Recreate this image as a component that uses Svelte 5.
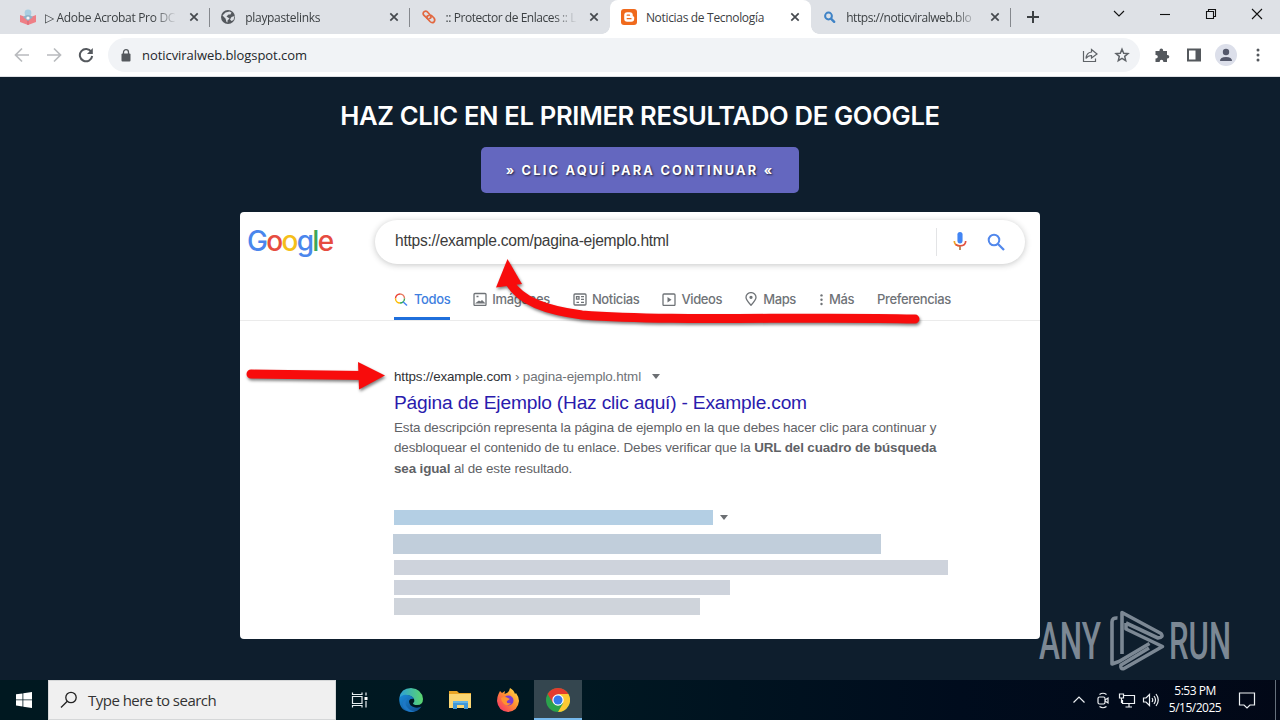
<script lang="ts">
  interface Tab {
    title: string;
    icon: string;
    active?: boolean;
  }

  const tabs: Tab[] = [
    { title: '▷ Adobe Acrobat Pro DC', icon: 'book' },
    { title: 'playpastelinks', icon: 'globe' },
    { title: ':: Protector de Enlaces :: L', icon: 'link' },
    { title: 'Noticias de Tecnología', icon: 'blogger', active: true },
    { title: 'https://noticviralweb.blo', icon: 'search' }
  ];

  const filters = ['Todos', 'Imágenes', 'Noticias', 'Videos', 'Maps', 'Más', 'Preferencias'];
</script>

<div class="screen">
  <div class="tabstrip">
    {#each tabs as tab, i}
      <div class="tab" class:active={tab.active} class:divided={i < 2 || i === 4}>
        <svg class="favicon" viewBox="0 0 16 16">
          {#if tab.icon === 'book'}
            <path d="M0 6l8 3 8-3v7l-8 3-8-3z" fill="#ee7f86" />
            <path d="M8 9v7" stroke="#d9606c" />
            <circle cx="8" cy="4" r="3.4" fill="#a9cfe2" />
            <path d="M3 8q5-4 10 0l-5 4z" fill="#8fb2c8" />
            <circle cx="8" cy="9" r="1.6" fill="#f4f4f6" />
          {:else if tab.icon === 'globe'}
            <circle cx="8" cy="8" r="7" fill="#54585d" />
            <path d="M2.500 6.500l3 3 1 3.500 1 .500v-2l2-2-3-2 2-2h2l1-2-2-1-4 1zM11.500 8l3-1-1 4-2 1-1.500-1.500z" fill="#dee1e6" />
          {:else if tab.icon === 'link'}
            <g fill="none" stroke="#e2673f" stroke-width="1.700" stroke-linecap="round">
              <path d="M6.500 9.500L3 6.500Q1 4 3.500 2.500Q5.500 1.500 7 3.500L9.500 6.500Q11 9 8.500 9.500" />
              <path d="M8 6.500Q5.500 6.500 6 9L9 12.500Q11 14.500 13 13Q14.500 11 13 9L10.500 6.500" />
            </g>
          {:else if tab.icon === 'blogger'}
            <rect width="16" height="16" rx="3" fill="#f06a1d" />
            <path d="M6.200 3.200h2.600a3 3 0 0 1 3 3v.600q0 .700.700.700.700 0 .700.700v1.600a3 3 0 0 1-3 3h-4a3 3 0 0 1-3-3V6.200a3 3 0 0 1 3-3z" fill="#fff" />
            <path d="M6.200 6.200h2.300M6.200 9.700h3.800" stroke="#f06a1d" stroke-width="1.300" stroke-linecap="round" />
          {:else}
            <circle cx="7.500" cy="7" r="3.400" fill="none" stroke="#3f83c6" stroke-width="2" />
            <path d="M10.200 9.800l3 3" stroke="#3f83c6" stroke-width="2.400" stroke-linecap="round" />
          {/if}
        </svg>
        <span class="tab-title" class:long={i === 2 || i === 4}>{tab.title}</span>
        <svg class="tab-close" viewBox="0 0 10 10"><path d="M1.300 1.300l7.400 7.400M8.700 1.300L1.300 8.700" stroke="#45494e" stroke-width="1.700" /></svg>
      </div>
    {/each}
    <svg class="new-tab" viewBox="0 0 12 12"><path d="M6 0v12M0 6h12" stroke="#3c4043" stroke-width="2" /></svg>
    <div class="window-controls">
      <svg viewBox="0 0 12 12"><path d="M1 3l5 5 5-5" /></svg>
      <svg viewBox="0 0 12 12"><path d="M1 6.500h10" /></svg>
      <svg viewBox="0 0 12 12"><path d="M1.500 3.500h7v7h-7zM3.500 3.500v-2h7v7h-2" /></svg>
      <svg viewBox="0 0 12 12"><path d="M1 1l10 10M11 1L1 11" /></svg>
    </div>
  </div>

  <div class="toolbar">
    <div class="nav">
      <svg viewBox="0 0 16 16" stroke="#b9bbbe"><path d="M15 8H1.500M8 1.500L1.500 8 8 14.500" /></svg>
      <svg viewBox="0 0 16 16" stroke="#b9bbbe"><path d="M1 8h13.500M8 1.500L14.500 8 8 14.500" /></svg>
      <svg viewBox="0 0 16 16" stroke="#55595e"><path d="M13.300 4.800A6.200 6.200 0 1 0 14.200 9" stroke-width="2" /><path d="M14.800 1v6H9z" fill="#55595e" stroke="none" /></svg>
    </div>
    <div class="omnibox">
      <svg class="lock" viewBox="0 0 10 13"><rect x=".5" y="4.500" width="9" height="8" rx="1" fill="#54585d" /><path d="M2.500 5V3.200a2.500 2.500 0 0 1 5 0V5" fill="none" stroke="#54585d" stroke-width="1.300" /></svg>
      <span class="address">noticviralweb.blogspot.com</span>
      <svg class="share" viewBox="0 0 16 16" fill="none" stroke="#5f6368" stroke-width="1.200"><path d="M1.500 4v10.500h12V11.500M9.500 2.500l5.500 4.500-5.500 4v-2.500Q6 8.500 4 11.500 4.500 5.500 9.500 5z" /></svg>
      <svg class="star" viewBox="0 0 16 16" fill="none" stroke="#5f6368" stroke-width="1.500"><path d="M8 2.200l1.700 4 4.300.400-3.300 2.800 1 4.300L8 11.400l-3.700 2.300 1-4.300L2 6.600l4.300-.400z" /></svg>
    </div>
    <div class="actions">
      <svg viewBox="0 0 16 16" fill="#54585d"><path d="M1.500 4h4V3.200a1.800 1.800 0 0 1 3.600 0V4H13v4h.500a1.800 1.800 0 0 1 0 3.600H13V15H9.300v-.500a1.800 1.800 0 0 0-3.600 0v.500H1.500v-3.500H2a1.800 1.800 0 0 0 0-3.600h-.500z" /></svg>
      <svg viewBox="0 0 16 16"><path d="M2 2.500h12v11H2z" fill="none" stroke="#54585d" stroke-width="2" /><path d="M9.500 2h5v12h-5z" fill="#54585d" /></svg>
      <span class="avatar"><svg viewBox="0 0 16 16" fill="#54586b"><circle cx="8" cy="5" r="3.200" /><path d="M2 14q0-4 6-4t6 4z" /></svg></span>
      <svg viewBox="0 0 16 16" fill="#54585d"><circle cx="8" cy="3" r="1.500" /><circle cx="8" cy="8" r="1.500" /><circle cx="8" cy="13" r="1.500" /></svg>
    </div>
  </div>

  <main>
    <h1>HAZ CLIC EN EL PRIMER RESULTADO DE GOOGLE</h1>
    <button>» CLIC AQUÍ PARA CONTINUAR «</button>

    <section class="preview">
      <div class="search-row">
        <div class="google"><span class="b">G</span><span class="r">o</span><span class="y">o</span><span class="b">g</span><span class="g">l</span><span class="r">e</span></div>
        <div class="search-box">
          <span class="query">https://example.com/pagina-ejemplo.html</span>
          <span class="rule"></span>
          <svg class="mic" viewBox="0 0 14 20">
            <rect x="4.300" y="0" width="5.400" height="12" rx="2.700" fill="#4285f4" />
            <path d="M1 9.500q0 5 6 5" fill="none" stroke="#f0a328" stroke-width="1.800" />
            <path d="M13 9.500q0 5-6 5-3 0-4.500-1.500" fill="none" stroke="#e25241" stroke-width="1.800" />
            <path d="M7 15v4" stroke="#b87842" stroke-width="1.800" />
          </svg>
          <svg class="glass" viewBox="0 0 18 18" fill="none" stroke="#5288ec" stroke-width="2"><circle cx="7" cy="7" r="5.300" /><path d="M11 11l6 6" stroke-width="2.300" /></svg>
        </div>
      </div>

      <div class="filters">
        {#each filters as name, i}
          <div class="filter" class:selected={i === 0}>
            {#if i === 0}
              <svg viewBox="0 0 14 14" fill="none" stroke-width="1.400"><path d="M1.500 6.500A4.500 4.500 0 0 1 6 2" stroke="#ea4335" /><path d="M6 2a4.500 4.500 0 0 1 4.500 4.500" stroke="#e8775f" /><path d="M1.500 6.500A4.500 4.500 0 0 0 6 11" stroke="#fbbc04" /><path d="M6 11a4.500 4.500 0 0 0 4.500-4.500" stroke="#34a853" /><path d="M9 9.700l4 3.800" stroke="#4285f4" /></svg>
            {:else if i === 1}
              <svg viewBox="0 0 14 14" fill="none" stroke="#6f7377" stroke-width="1.300"><rect x="1" y="1.500" width="12" height="12" rx="1" /><path d="M4 10.800l2-1.500 1.500 1 1.500-1.500 2 2zM3.500 4.500h2" fill="#6f7377" /></svg>
            {:else if i === 2}
              <svg viewBox="0 0 14 14" fill="none" stroke="#6f7377" stroke-width="1.300"><rect x="1" y="2" width="12" height="11" rx="1" /><path d="M3.500 4.700h2.500v2.500H3.500zM8 4.700h3M8 7.300h3M3.500 10.300H6M8 10.300h3" /></svg>
            {:else if i === 3}
              <svg viewBox="0 0 14 14"><rect x="1" y="2" width="12" height="11.500" rx="1" fill="none" stroke="#6f7377" stroke-width="1.300" /><path d="M5.500 5v5.500l4-2.750z" fill="#6f7377" /></svg>
            {:else if i === 4}
              <svg class="pin" viewBox="0 0 12 14" fill="none" stroke="#6f7377" stroke-width="1.300"><path d="M6 13.300Q1 8 1 5.300a5 4.700 0 0 1 10 0Q11 8 6 13.300z" /><circle cx="6" cy="5.300" r="1" fill="#6f7377" /></svg>
            {:else if i === 5}
              <svg class="dots" viewBox="0 0 5 14" fill="#6f7377"><circle cx="2.500" cy="3.400" r="1.200" /><circle cx="2.500" cy="7.700" r="1.200" /><circle cx="2.500" cy="12" r="1.200" /></svg>
            {/if}
            <span>{name}</span>
          </div>
        {/each}
      </div>

      <div class="result">
        <div class="crumbs"><span class="host">https://example.com</span> › pagina-ejemplo.html <i class="caret"></i></div>
        <div class="title">Página de Ejemplo (Haz clic aquí) - Example.com</div>
        <p>
          <span class="line">Esta descripción representa la página de ejemplo en la que debes hacer clic para continuar y</span>
          <span class="line">desbloquear el contenido de tu enlace. Debes verificar que la <b>URL del cuadro de búsqueda</b></span>
          <span class="line"><b>sea igual</b> al de este resultado.</span>
        </p>
      </div>

      <div class="placeholder">
        <div class="with-caret"><div class="bar one"></div><i class="caret"></i></div>
        <div class="bar two"></div>
        <div class="bar three"></div>
        <div class="bar four"></div>
        <div class="bar five"></div>
      </div>

      <!-- hand drawn arrows over the result page -->
      <svg class="arrows" viewBox="0 0 800 427">
        <g fill="none" stroke="#f80c0c" stroke-linecap="round" stroke-width="9">
          <path d="M270 71C281 89 305 98 342 103C435 110 560 104 675 107" />
          <path d="M11 162L124 163.500" />
        </g>
        <path d="M267.500 47l14.500 25L256 75.500z" fill="#f80c0c" />
        <path d="M118 150l27 13.500-26 14z" fill="#f80c0c" />
      </svg>
    </section>

    <svg class="watermark" viewBox="0 0 192 62">
      <text x="0" y="49" textLength="62" lengthAdjust="spacingAndGlyphs">ANY</text>
      <text x="130" y="49" textLength="62" lengthAdjust="spacingAndGlyphs">RUN</text>
      <g fill="none" stroke="#7c8894" stroke-width="3.600" stroke-linejoin="round">
        <path d="M78.500 8Q73 7.500 73 12v42l7-2.500L110.500 33.500" />
        <path d="M83 44V2.500L122 23.500q3 4-3 4.500L87 13" />
        <path d="M87 13v6l36.500 17.500L85 58.500q-4 1-3-3.500L110 38" />
      </g>
    </svg>
  </main>

  <footer>
    <div class="start">
      <svg viewBox="0 0 16 16" fill="#fff"><path d="M0 2.300l6.500-.900v6.100H0zM7.300 1.300L16 0v7.500H7.300zM0 8.300h6.500v6.200L0 13.600zM7.300 8.300H16V16l-8.700-1.300z" /></svg>
    </div>
    <div class="searchbar">
      <svg viewBox="0 0 18 18" fill="none" stroke="#222" stroke-width="1.300"><circle cx="11" cy="6.500" r="5.200" /><path d="M7.300 10.200L1 16.500" /></svg>
      <span>Type here to search</span>
    </div>
    <div class="app">
      <svg class="taskview" viewBox="0 0 18 18" fill="none" stroke="#e6edf0" stroke-width="1.200"><path d="M1.500 5.500h9.500v7H1.500zM1.500 1.500v2h9.500v-2M1.500 16.500v-2h9.500v2M15 1.500v3M15 10v6.500" /><path d="M13.500 6h3v3h-3z" fill="#fff" stroke="none" /></svg>
    </div>
    <div class="app edge-app">
      <svg viewBox="0 0 24 24">
        <defs>
          <linearGradient id="edgeTop" x1="0" x2="1"><stop offset="0" stop-color="#2c9fd8" /><stop offset="1" stop-color="#5bd66d" /></linearGradient>
          <linearGradient id="edgeBody" x1="0" y1="0" x2="1" y2="1"><stop offset="0" stop-color="#198bd8" /><stop offset="1" stop-color="#114a8b" /></linearGradient>
        </defs>
        <path d="M.3 10Q2 0 12 0q11 1 12 11 0 6-6 6-4 0-4-2 2-1 1-4-2-4-7-3.500Q3 8 .3 10z" fill="url(#edgeTop)" />
        <path d="M.2 10.500Q3 6 8.500 7q5 .500 6.500 4-4-1-5 2 0 5 6 6.500 4 .500 6.500-1Q19 24 12 24 0 23 .2 10.500z" fill="url(#edgeBody)" />
        <path d="M8.500 10.500Q5 15 8 19t8 4.500q-4 1-7-.200Q3 20 3.500 15q1-4 5-4.500z" fill="#1d78c6" />
      </svg>
    </div>
    <div class="app files-app">
      <svg viewBox="0 0 24 24"><path d="M1 3h8l2 2h12v15H1z" fill="#e9a526" /><path d="M1 6h22v14H1z" fill="#fbd673" /><path d="M5 21v-8h15v8h-4v-4H9v4z" fill="#4198d7" /><path d="M5 13h15v2H5z" fill="#65b5e5" /></svg>
    </div>
    <div class="app firefox-app">
      <svg viewBox="0 0 24 24">
        <defs><linearGradient id="fox" x1="1" y1="0" x2="0" y2="1"><stop offset="0" stop-color="#ffe94a" /><stop offset=".45" stop-color="#ff9030" /><stop offset="1" stop-color="#f52472" /></linearGradient></defs>
        <path d="M2.500 6L4 3l2 2 3-2-.500 3Q12 5 13 3l1-3q4 2 5 6l1-1q3 4 3 8-1 10-11 11Q2 23 1 13q0-4 1.500-7z" fill="url(#fox)" />
        <circle cx="12.500" cy="12.500" r="5" fill="#793bd0" />
        <path d="M5 10q4-2 7 0l2 1-3 2q-1 3 4 2-3 4-7 1-3-3-3-6z" fill="#ff9230" />
      </svg>
    </div>
    <div class="app running">
      <svg viewBox="0 0 24 24">
        <circle cx="12" cy="12" r="12" fill="#2ba24c" />
        <path d="M1.600 6a12 12 0 0 1 20.800 0H12L7 15z" fill="#e33b2e" />
        <path d="M22.400 6A12 12 0 0 1 12 24l5.200-9L12 6z" fill="#fcc934" />
        <circle cx="12" cy="12" r="5.700" fill="#fff" /><circle cx="12" cy="12" r="4.500" fill="#3478ec" />
      </svg>
    </div>
    <div class="tray">
      <svg viewBox="0 0 18 18"><path d="M3.500 11.500L9 6l5.500 5.500" /></svg>
      <svg viewBox="0 0 18 18"><rect x="4" y="6" width="7" height="7" rx="1.500" /><path d="M11 9l3-2v5l-3-2M5.500 3.500Q9 1 12.500 3.500M5.500 15.500Q9 18 12.500 15.500" /></svg>
      <svg viewBox="0 0 18 18"><path d="M6 4.500h10.500v8H4.500V9M1.500 3h4v4h-4zM3.500 7v5M11 12.500v3M7.500 16h6.500" /></svg>
      <svg viewBox="0 0 18 18"><path d="M1.500 7h2.500L7.500 3.500v11L4 11H1.500zM10 7q1.500 2 0 4M12 5q3 4 0 8M14 3q4.500 6 0 12" /></svg>
      <div class="clock"><span>5:53 PM</span><span>5/15/2025</span></div>
      <svg class="notice" viewBox="0 0 18 18"><path d="M1.500 2h15v12h-4.500l-3 3-3-3H1.500z" /></svg>
      <i class="peek"></i>
    </div>
  </footer>
</div>

<style>
  :global(body) {
    overflow: hidden;
  }

  .screen {
    width: 1280px;
    height: 720px;
    display: flex;
    flex-direction: column;
    background: #0e1e2d;
    font-family: 'Open Sans', 'Noto Sans', sans-serif;
  }

  svg {
    display: block;
    flex: none;
  }

  .tabstrip {
    height: 34px;
    flex: none;
    display: flex;
    align-items: center;
    box-sizing: border-box;
    padding-left: 9.5px;
    background: #dee1e6;
  }

  .tab {
    width: 200.3px;
    height: 34px;
    box-sizing: border-box;
    display: flex;
    align-items: center;
    padding: 0 11px 0 10.5px;
    position: relative;
    flex: none;
  }

  .tab.divided::after {
    content: '';
    position: absolute;
    right: 0;
    top: 8px;
    width: 1px;
    height: 19px;
    background: #85888d;
  }

  .tab.active {
    background: #fff;
    border-radius: 8px 8px 0 0;
  }

  .tab.active::before,
  .tab.active::after {
    content: '';
    position: absolute;
    bottom: 0;
    width: 8px;
    height: 8px;
  }

  .tab.active::before {
    left: -8px;
    background: radial-gradient(circle at 0 0, transparent 7.5px, #fff 8px);
  }

  .tab.active::after {
    right: -8px;
    background: radial-gradient(circle at 100% 0, transparent 7.5px, #fff 8px);
  }

  .favicon {
    width: 16px;
    height: 16px;
    margin-right: 9px;
  }

  .tab-title {
    flex: 1;
    overflow: hidden;
    white-space: nowrap;
    font-size: 12px;
    letter-spacing: -0.32px;
    color: #3c4043;
    margin-right: 12px;
    mask-image: linear-gradient(90deg, #000 82%, transparent);
  }

  .tab-title.long {
    letter-spacing: -0.45px;
  }

  .active .tab-title {
    mask-image: none;
  }

  .tab-close {
    width: 10px;
    height: 10px;
  }

  .new-tab {
    width: 12px;
    height: 12px;
    margin-left: 16px;
  }

  .window-controls {
    margin-left: auto;
    display: flex;
    gap: 34px;
    padding: 0 17px 6px 0;
  }

  .window-controls svg {
    width: 12px;
    height: 12px;
    fill: none;
    stroke: #111;
    stroke-width: 1.1;
  }

  .toolbar {
    height: 43px;
    flex: none;
    box-sizing: border-box;
    display: flex;
    align-items: center;
    background: #fff;
    border-bottom: 1px solid #dfe1e5;
    padding: 0 14px;
  }

  .nav {
    display: flex;
    gap: 16px;
    width: 94px;
  }

  .nav svg {
    width: 16px;
    height: 16px;
    fill: none;
    stroke-width: 1.7;
  }

  .omnibox {
    width: 1032px;
    height: 34px;
    box-sizing: border-box;
    border-radius: 17px;
    background: #f1f3f6;
    display: flex;
    align-items: center;
    padding: 0 10px 0 13px;
  }

  .lock {
    width: 10px;
    height: 13px;
    margin-right: 11px;
  }

  .address {
    flex: 1;
    font-size: 13px;
    letter-spacing: -0.06px;
    color: #24272b;
  }

  .share,
  .star {
    width: 16px;
    height: 16px;
    margin-left: 16px;
  }

  .actions {
    display: flex;
    align-items: center;
    margin-left: 14px;
    gap: 16px;
  }

  .actions svg {
    width: 16px;
    height: 16px;
  }

  .avatar {
    width: 22px;
    height: 22px;
    margin: 0 -3px;
    border-radius: 50%;
    background: #dcdfea;
    display: grid;
    place-items: center;
  }

  main {
    height: 603px;
    flex: none;
    display: flex;
    flex-direction: column;
    align-items: center;
    position: relative;
    font-family: Inter, sans-serif;
  }

  h1 {
    margin: 23px 0 0;
    height: 32px;
    line-height: 32px;
    font-size: 25.6px;
    font-weight: 600;
    letter-spacing: -0.32px;
    color: #fff;
    white-space: nowrap;
  }

  button {
    margin-top: 15px;
    width: 318px;
    height: 46px;
    padding: 0;
    flex: none;
    border: 0;
    border-radius: 5px;
    background: #6467bf;
    color: #fff;
    font: 700 12.8px Inter, sans-serif;
    letter-spacing: 2.22px;
    text-shadow: 1px 1px 2px rgba(0, 0, 0, 0.7);
    white-space: nowrap;
  }

  .preview {
    margin-top: 19px;
    width: 800px;
    height: 427px;
    flex: none;
    position: relative;
    border-radius: 4px;
    overflow: hidden;
    background: #fff;
    font-family: 'Liberation Sans', Arial, sans-serif;
  }

  .search-row {
    display: flex;
    height: 53px;
    padding: 8px 15px 0 7px;
    box-sizing: border-box;
  }

  .google {
    width: 128px;
    font: 500 28px/42px Inter, sans-serif;
    letter-spacing: -1.7px;
  }

  .b { color: #4a86ec; }
  .r { color: #e64c40; }
  .y { color: #f5be1a; }
  .g { color: #3ba757; }

  .search-box {
    width: 650px;
    height: 44px;
    box-sizing: border-box;
    border-radius: 22px;
    background: #fff;
    box-shadow: 0 1px 6px rgba(32, 33, 36, 0.26);
    display: flex;
    align-items: center;
    padding: 0 20px;
  }

  .query {
    flex: 1;
    font-size: 15.6px;
    letter-spacing: -0.27px;
    color: #3b3b3b;
    padding-bottom: 3px;
  }

  .rule {
    width: 1px;
    height: 28px;
    background: #e3e4e6;
    margin-right: 16px;
  }

  .mic {
    width: 14px;
    height: 19px;
  }

  .glass {
    width: 18px;
    height: 18px;
    margin-left: 20px;
  }

  .mic,
  .glass {
    margin-bottom: 1px;
  }

  .filters {
    display: flex;
    gap: 23px;
    height: 56px;
    box-sizing: border-box;
    padding-left: 154px;
    border-bottom: 1px solid #ebebeb;
    font: 500 13px Inter, sans-serif;
    letter-spacing: -0.38px;
    color: #6f7377;
  }

  .filter {
    display: flex;
    align-items: center;
    gap: 5px;
    padding-top: 13px;
    height: 42px;
    white-space: nowrap;
  }

  .filter svg {
    width: 14px;
    height: 14px;
  }

  .filter .pin {
    width: 12px;
    margin-right: 1px;
  }

  .filter .dots {
    width: 5px;
  }

  .filter.selected {
    color: #3f7fe0;
    gap: 6px;
    box-shadow: inset 0 -3px #1f6fdc;
  }

  .result {
    padding: 47px 0 0 154px;
    color: #5f6266;
  }

  .crumbs {
    font-size: 13.4px;
    line-height: 18px;
    letter-spacing: -0.13px;
    white-space: nowrap;
    color: #707377;
  }

  .host {
    color: #303236;
  }

  .caret {
    display: inline-block;
    border: 4px solid transparent;
    border-top: 5px solid #6c6f73;
    border-bottom: 0;
    margin-left: 7px;
    vertical-align: 2px;
  }

  .title {
    margin-top: 5px;
    font-size: 19.2px;
    line-height: 24px;
    letter-spacing: -0.2px;
    color: #2a1bad;
    white-space: nowrap;
  }

  .result p {
    margin: 3px 0 0;
    font-size: 13.4px;
    line-height: 20.3px;
    letter-spacing: -0.11px;
  }

  .line {
    display: block;
    white-space: nowrap;
  }

  .placeholder {
    padding: 31px 0 0 153.5px;
    display: flex;
    flex-direction: column;
  }

  .with-caret {
    display: flex;
    align-items: center;
  }

  .bar {
    background: #ced3dc;
  }

  .one {
    width: 319.5px;
    height: 15px;
    background: #b4cfe4;
  }

  .two {
    width: 488px;
    height: 20px;
    margin: 9px 0 6px -1px;
    background: #c1cedb;
  }

  .three {
    width: 554px;
    height: 15px;
  }

  .four {
    width: 336.5px;
    height: 15px;
    margin: 5px 0 3px;
  }

  .five {
    width: 306px;
    height: 17px;
    background: #cfd4db;
  }

  .arrows {
    position: absolute;
    left: 0;
    top: 0;
    width: 800px;
    height: 427px;
    filter: drop-shadow(1px 2px 1.5px rgba(0, 0, 0, 0.5));
  }

  .watermark {
    position: absolute;
    left: 1039px;
    top: 533px;
    width: 192px;
    height: 62px;
    overflow: visible;
  }

  .watermark text {
    font: 500 51px Roboto, sans-serif;
    fill: #7c8894;
  }

  footer {
    height: 40px;
    flex: none;
    display: flex;
    background: linear-gradient(90deg, #001820, #001822 45%, #000c1d 75%, #020817);
  }

  .start {
    width: 48px;
    display: grid;
    place-items: center;
  }

  .start svg {
    width: 16px;
    height: 16px;
  }

  .searchbar {
    width: 288px;
    box-sizing: border-box;
    border: 1px solid #d5d7d8;
    background: #f0f0f0;
    display: flex;
    align-items: center;
    padding-left: 11px;
    font-size: 15px;
    letter-spacing: -0.52px;
    color: #333;
  }

  .searchbar svg {
    width: 18px;
    height: 18px;
    margin-right: 10px;
  }

  .app {
    width: 48px;
    display: grid;
    place-items: center;
  }

  .app svg {
    width: 24px;
    height: 24px;
  }

  .app .taskview {
    width: 18px;
    height: 18px;
  }

  .edge-app {
    width: 54px;
  }

  .files-app {
    width: 44px;
  }

  .firefox-app {
    width: 52px;
  }

  .running {
    background: #34464f;
    box-shadow: inset 0 -2px #76b9ed;
  }

  .tray {
    margin-left: auto;
    display: flex;
    align-items: center;
    gap: 6px;
    color: #fff;
  }

  .tray svg {
    width: 18px;
    height: 18px;
    fill: none;
    stroke: #eef1f4;
    stroke-width: 1.2;
  }

  .clock {
    width: 58px;
    display: flex;
    flex-direction: column;
    align-items: center;
    font-size: 12px;
    line-height: 17.5px;
    letter-spacing: -0.5px;
    white-space: nowrap;
    padding-bottom: 2px;
  }

  .tray .notice {
    margin-left: 8px;
  }

  .peek {
    width: 1px;
    height: 40px;
    margin: 0 4px 0 13px;
    background: #66707c;
  }
</style>
